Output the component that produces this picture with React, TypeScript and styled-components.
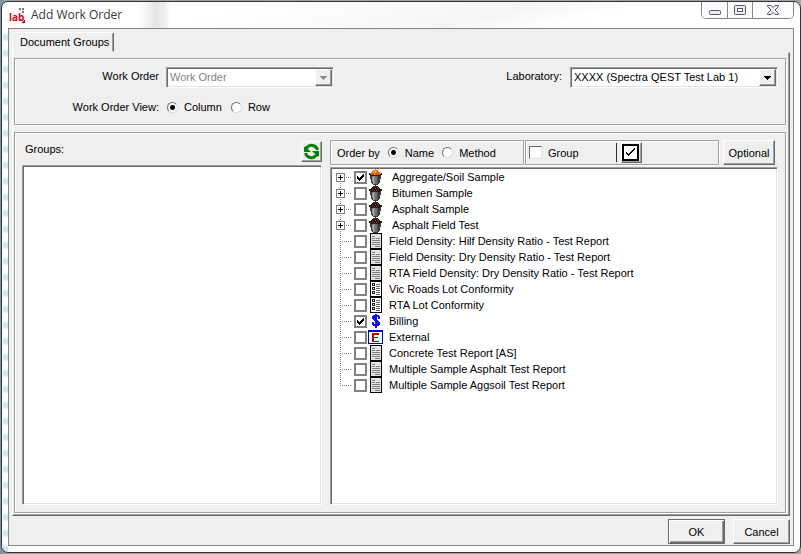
import React, { useState } from "react";
import styled, { createGlobalStyle, css } from "styled-components";

const face = "#efefef";
const mid = "#a0a0a0";
const dark = "#696969";

const GlobalStyle = createGlobalStyle`
  * { box-sizing: border-box; }
  body {
    margin: 0;
    font: 11px/16px "Liberation Sans", Arial, sans-serif;
    color: #000;
  }
  input, button, select { font: inherit; color: inherit; margin: 0; }
`;

const raised = css`
  border: 1px solid;
  border-color: #fff ${dark} ${dark} #fff;
  box-shadow: inset -1px -1px ${mid};
`;

const sunken = css`
  border: 1px solid;
  border-color: ${mid} #fff #fff ${mid};
  box-shadow: inset 1px 1px ${dark}, inset -1px -1px #e3e3e3;
`;

const etched = css`
  border: 1px solid ${mid};
  box-shadow: inset 1px 1px #fff, 1px 1px #fff;
`;

const Desktop = styled.div`
  min-height: 100vh;
  display: flex;
  padding: 1px 0 1px 1px;
  background: linear-gradient(90deg, #7e93a5 0 2px, #a3a5a4 8px);
`;

const Window = styled.main`
  flex: 1;
  display: flex;
  flex-direction: column;
  padding: 0 6px 6px;
  border: 1px solid #303236;
  border-radius: 7px;
  background:
    linear-gradient(90deg, #fff0 136px, #e6e6e6 154px, #efefef 164px, #fff0 168px) 0 0 / 100% 26px no-repeat,
    linear-gradient(165deg, #fff 30%, #f5f5f5 60%, #fff 72%) 0 0 / 100% 26px no-repeat,
    repeating-linear-gradient(180deg, #fff 0 4px, #cfe2f8 8px 10px, #fff 14px 16px) 1px 26px / 5px 100% no-repeat,
    #fdfdfd;
`;

const TitleBar = styled.header`
  display: flex;
  justify-content: space-between;
  height: 26px;
`;

const Title = styled.h1`
  display: flex;
  align-items: center;
  gap: 5px;
  margin: 0;
  font: 12px/26px "Open Sans", "Noto Sans", sans-serif;
  color: #363636;
`;

const Logo = styled.span`
  display: grid;
  width: 18px;
  height: 18px;
  > * { grid-area: 1 / 1; }
`;

const LogoWord = styled.span`
  padding-left: 1px;
  font: bold 10px/22px "Open Sans", sans-serif;
  color: #d4001a;
`;

const WindowButtons = styled.div`
  display: flex;
  height: 17px;
  border: 1px solid #85888c;
  border-top: 0;
  border-radius: 0 0 5px 5px;
  overflow: hidden;
`;

const WindowButton = styled.button<{ $wide?: boolean }>`
  display: grid;
  place-items: center;
  width: ${(p) => (p.$wide ? 41 : 25)}px;
  padding: 0;
  border: 0;
  background: #fcfcfc;
  & + & { border-left: 1px solid #85888c; }
`;

const Client = styled.div`
  flex: 1;
  display: flex;
  flex-direction: column;
  padding: 3px 3px 1px 3px;
  border: 1px solid #858585;
  background: ${face};
`;

const Tab = styled.button`
  align-self: flex-start;
  height: 20px;
  padding: 0 4px 0 7px;
  border: 1px solid;
  border-color: #fff ${dark} transparent #fff;
  box-shadow: inset -1px 0 ${mid};
  border-radius: 2px 2px 0 0;
  background: ${face};
`;

const TabPage = styled.section`
  flex: 1;
  display: flex;
  flex-direction: column;
  gap: 7px;
  padding: 5px 3px 2px 1px;
  border: 1px solid;
  border-color: transparent ${dark} ${dark} #fff;
  box-shadow: inset -1px -1px ${mid};
`;

const Filters = styled.div`
  display: flex;
  justify-content: space-between;
  align-items: flex-start;
  min-height: 67px;
  padding: 8px 7px 8px 19px;
  ${etched}
`;

const FilterGrid = styled.div`
  display: grid;
  grid-template-columns: 125px auto;
  column-gap: 7px;
  row-gap: 10px;
`;

const Caption = styled.label`
  text-align: right;
  line-height: 18px;
`;

const LabField = styled.div`
  display: flex;
  gap: 8px;
`;

const ComboFrame = styled.span<{ $wide?: boolean }>`
  display: grid;
  grid-template-columns: 1fr 17px;
  width: ${(p) => (p.$wide ? 208 : 168)}px;
  height: 21px;
  padding: 1px;
  background: #fff;
  ${sunken}
`;

const ComboSelect = styled.select`
  grid-area: 1 / 1 / 2 / 3;
  appearance: none;
  padding: 0 18px 0 2px;
  border: 0;
  background: transparent;
  outline-offset: -2px;
  line-height: 17px;
  &:disabled { color: #838383; opacity: 1; }
`;

const ComboArrow = styled.span<{ $off?: boolean }>`
  grid-area: 1 / 2;
  display: grid;
  place-items: center;
  pointer-events: none;
  color: ${(p) => (p.$off ? "#8c8c8c" : "#000")};
  background: ${face};
  ${raised}
`;

const Options = styled.div`
  display: flex;
  align-items: center;
  gap: 9px;
  padding-left: 1px;
`;

const Choice = styled.label`
  display: flex;
  align-items: center;
  gap: 6px;
`;

const Radio = styled.input`
  appearance: none;
  width: 11px;
  height: 11px;
  border: 1px solid;
  border-color: #707070 #d8d8d8 #d8d8d8 #707070;
  border-radius: 50%;
  background: #fff;
  &:checked { background: radial-gradient(circle, #000 0 2px, #fff 3px); }
`;

const Work = styled.div`
  flex: 1;
  display: grid;
  grid-template-columns: 300fr 448fr;
  gap: 8px;
  padding: 7px;
  ${etched}
`;

const Pane = styled.section`
  display: flex;
  flex-direction: column;
  min-width: 0;
`;

const PaneHead = styled.div`
  display: flex;
  justify-content: space-between;
  align-items: flex-start;
  height: 25px;
  padding: 1px 0 0 3px;
`;

const IconButton = styled.button`
  display: grid;
  place-items: center;
  width: 21px;
  height: 21px;
  padding: 0 1px 1px 0;
  background: ${face};
  ${raised}
`;

const List = styled.div`
  flex: 1;
  background: #fff;
  ${sunken}
`;

const ToolRow = styled.div`
  display: grid;
  grid-template-columns: 1fr 1fr 55px;
  column-gap: 1px;
  height: 27px;
  padding: 0 3px 2px 0;
`;

const ToolGroup = styled.div`
  display: flex;
  align-items: center;
  gap: 8px;
  padding-left: 6px;
  ${etched}
`;

const GroupTools = styled(ToolGroup)`
  gap: 0;
  padding-left: 3px;
`;

const Divider = styled.span`
  width: 1px;
  height: 19px;
  margin: 0 4px 0 37px;
  background: #303030;
`;

const PushButton = styled.button<{ $default?: boolean }>`
  height: 25px;
  padding: 0;
  background: ${face};
  ${raised}
  ${(p) =>
    p.$default &&
    css`
      border-color: ${dark};
      box-shadow: inset 1px 1px #fff, inset -1px -1px ${dark}, inset -2px -2px ${mid};
    `}
`;

const OptionalButton = styled(PushButton)`
  margin-left: 3px;
`;

const Tree = styled.ul`
  flex: 1;
  margin: 0;
  padding: 1px 1px 1px 5px;
  list-style: none;
  background: #fff;
  ${sunken}
`;

const TreeRow = styled.li`
  display: flex;
  height: 16px;
`;

const RowLabel = styled.label<{ $sample?: boolean }>`
  display: flex;
  align-items: center;
  gap: ${(p) => (p.$sample ? 9 : 6)}px;
  white-space: nowrap;
`;

const RowMark = styled.span`
  display: flex;
  align-items: center;
  gap: 1px;
`;

const BoxStack = styled.span`
  display: grid;
  place-items: center;
  > * { grid-area: 1 / 1; }
  svg { pointer-events: none; visibility: hidden; }
  input:checked + svg { visibility: visible; }
`;

const TreeBox = styled.input`
  appearance: none;
  width: 13px;
  height: 13px;
  border: 2px solid #808080;
  background: #fff;
`;

const PlainBox = styled.input`
  appearance: none;
  width: 13px;
  height: 13px;
  border: 1px solid;
  border-color: ${dark} #e3e3e3 #e3e3e3 ${dark};
  background: #fff;
`;

const Actions = styled.footer`
  display: grid;
  grid-template-columns: 57px 57px;
  justify-content: end;
  gap: 8px;
  padding-top: 3px;
`;

const Tick = () => (
  <svg width="9" height="9" viewBox="0 0 9 9" shapeRendering="crispEdges">
    <path d="M1 3h1v1h1v1h1v-1h1v-1h1v-1h1v-1h1v3h-1v1h-1v1h-1v1h-1v1h-1v-1h-1v-1h-1z" />
  </svg>
);

const Arrow = () => (
  <svg width="7" height="4" viewBox="0 0 7 4" shapeRendering="crispEdges">
    <path d="M0 0h7v1h-1v1h-1v1h-1v1h-1v-1h-1v-1h-1v-1h-1z" fill="currentColor" />
  </svg>
);

const Branch = ({ expandable, first, last }: { expandable: boolean; first: boolean; last: boolean }) => (
  <svg width="18" height="16" viewBox="0 0 18 16" shapeRendering="crispEdges">
    <path d={`M4.5 ${first ? 8 : 0}V${last ? 9 : 16}`} stroke="#808080" strokeDasharray="1 1" />
    <path d="M4 8.5H16" stroke="#808080" strokeDasharray="1 1" />
    {expandable && (
      <>
        <rect x="0.5" y="4.5" width="8" height="8" fill="#fff" stroke="#808080" />
        <path d="M2 8.5h5M4.5 6v5" stroke="#000" />
      </>
    )}
  </svg>
);

type Kind = "soil" | "bitumen" | "report" | "lot" | "billing" | "external";

const Bucket = ({ soil }: { soil: boolean }) => (
  <svg width="15" height="16" viewBox="0 0 15 16" shapeRendering="crispEdges">
    <path d="M2 6h11v4h-1v4h-1v1h-1v1H5v-1H4v-1H3v-4H2z" fill="#3c3c3c" />
    <path d="M4 7h3v8H5v-2H4z" fill="#8a8a8a" />
    <path d="M5 8h1v6H5z" fill="#b0b0b0" />
    <path d="M7 7h2v8H7z" fill="#707070" />
    <path d="M9 7h1v8H9z" fill="#545454" />
    <path d="M1 4h13v2h-1v1H2V6H1z" fill="#222" />
    <path
      d="M7 0h1v1h2v1h1v1h1v1h1v1h-1v1H3V5H2V4h1V3h1V2h1V1h2z"
      fill={soil ? "#e87416" : "#2c0f0a"}
    />
    {soil ? (
      <>
        <path d="M7 1h1v1h1v1h-1v1H6V3H5V2h2z" fill="#ffa53a" />
        <path d="M4 5h2v1H4zM8 4h1v1H8zM9 5h2v1H9z" fill="#a8430c" />
      </>
    ) : (
      <path d="M7 1h1v1H7zM5 2h1v1H5zM9 2h1v1H9zM4 4h1v1H4zM7 3h1v1H7zM10 4h1v1h-1zM6 5h1v1H6zM8 5h1v1H8z" fill="#9a3822" />
    )}
  </svg>
);

const KindIcon = ({ kind }: { kind: Kind }) => {
  if (kind === "soil" || kind === "bitumen") return <Bucket soil={kind === "soil"} />;
  return (
    <svg width="15" height="16" viewBox="0 0 15 16" shapeRendering="crispEdges">
      {kind === "report" && (
        <>
          <rect x="2.5" y="0.5" width="11" height="15" fill="#e2e2e2" stroke="#000" />
          <path d="M4 3.500h3M4 5.500h3M8 5.500h4M4 7.500h8M4 9.500h8M4 11.500h8M7 13.500h5" stroke="#808080" />
        </>
      )}
      {kind === "lot" && (
        <>
          <rect x="2.5" y="0.5" width="11" height="15" fill="#fff" stroke="#000" />
          <path d="M4.500 2.500h2v2h-2zM4.500 6.500h2v2h-2zM4.500 10.500h2v2h-2z" fill="none" stroke="#222" />
          <path d="M8 3.500h4M8 5.500h4M8 7.500h4M8 9.500h4M8 11.500h4M8 13.500h4" stroke="#666" />
        </>
      )}
      {kind === "billing" && (
        <path
          d="M7 1h2v1h2v1h1v3h-2V4H9v3h1v1h1v1h1v3h-1v1H9v2H7v-2H5v-1H4v-3h2v2h1V8H6V7H5V6H4V3h1V2h2z"
          fill="#1010f0"
        />
      )}
      {kind === "external" && (
        <>
          <rect x="0.5" y="1.500" width="14" height="13" fill="#fff" stroke="#0000a8" />
          <path d="M0 2h15" stroke="#0000a8" strokeWidth="2" />
          <path d="M4 4h7v2H6v2h4v1H6v3h5v1H4z" fill="#b00000" />
        </>
      )}
    </svg>
  );
};

const rows: { name: string; kind: Kind; on?: boolean }[] = [
  { name: "Aggregate/Soil Sample", kind: "soil", on: true },
  { name: "Bitumen Sample", kind: "bitumen" },
  { name: "Asphalt Sample", kind: "bitumen" },
  { name: "Asphalt Field Test", kind: "bitumen" },
  { name: "Field Density: Hilf Density Ratio - Test Report", kind: "report" },
  { name: "Field Density: Dry Density Ratio - Test Report", kind: "report" },
  { name: "RTA Field Density: Dry Density Ratio - Test Report", kind: "report" },
  { name: "Vic Roads Lot Conformity", kind: "lot" },
  { name: "RTA Lot Conformity", kind: "lot" },
  { name: "Billing", kind: "billing", on: true },
  { name: "External", kind: "external" },
  { name: "Concrete Test Report [AS]", kind: "report" },
  { name: "Multiple Sample Asphalt Test Report", kind: "report" },
  { name: "Multiple Sample Aggsoil Test Report", kind: "report" },
];

export default function App() {
  const [view, setView] = useState("Column");
  const [order, setOrder] = useState("Name");

  return (
    <>
      <GlobalStyle />
      <Desktop>
        <Window>
          <TitleBar>
            <Title>
              <Logo>
                <LogoWord>lab</LogoWord>
                <svg width="18" height="18" viewBox="0 0 18 18" shapeRendering="crispEdges">
                  <path d="M11 2h2v2h-2zM14 2h2v2h-2zM14 5h2v2h-2z" fill="#777" />
                  <path d="M17 14v3h-3v-1h1v-1h1v-1z" fill="#d4001a" />
                </svg>
              </Logo>
              Add Work Order
            </Title>
            <WindowButtons>
              <WindowButton aria-label="Minimize">
                <svg width="12" height="10" viewBox="0 0 12 10">
                  <rect x="0.5" y="5.500" width="11" height="4" rx="1" fill="#eee" stroke="#53556b" />
                </svg>
              </WindowButton>
              <WindowButton aria-label="Maximize">
                <svg width="12" height="10" viewBox="0 0 12 10">
                  <rect x="0.5" y="0.5" width="11" height="9" rx="1" fill="#eee" stroke="#53556b" />
                  <rect x="3.5" y="3.500" width="5" height="3" fill="#fff" stroke="#53556b" />
                </svg>
              </WindowButton>
              <WindowButton $wide aria-label="Close">
                <svg width="12" height="10" viewBox="0 0 12 10">
                  <path d="M.5.5h3.500L6 2.500l2-2h3.500v1L8 5l3.500 3.500v1H8l-2-2-2 2H.5v-1L4 5 .5 1.500z" fill="#eee" stroke="#53556b" />
                </svg>
              </WindowButton>
            </WindowButtons>
          </TitleBar>
          <Client>
            <Tab type="button">Document Groups</Tab>
            <TabPage>
              <Filters>
                <FilterGrid>
                  <Caption htmlFor="order">Work Order</Caption>
                  <ComboFrame>
                    <ComboSelect id="order" disabled>
                      <option>Work Order</option>
                    </ComboSelect>
                    <ComboArrow $off>
                      <Arrow />
                    </ComboArrow>
                  </ComboFrame>
                  <Caption as="span">Work Order View:</Caption>
                  <Options role="radiogroup" aria-label="Work Order View">
                    {["Column", "Row"].map((v) => (
                      <Choice key={v}>
                        <Radio type="radio" name="view" checked={view === v} onChange={() => setView(v)} />
                        {v}
                      </Choice>
                    ))}
                  </Options>
                </FilterGrid>
                <LabField>
                  <Caption htmlFor="lab">Laboratory:</Caption>
                  <ComboFrame $wide>
                    <ComboSelect id="lab">
                      <option>XXXX (Spectra QEST Test Lab 1)</option>
                    </ComboSelect>
                    <ComboArrow>
                      <Arrow />
                    </ComboArrow>
                  </ComboFrame>
                </LabField>
              </Filters>
              <Work>
                <Pane>
                  <PaneHead>
                    <span>Groups:</span>
                    <IconButton aria-label="Refresh groups">
                      <svg width="17" height="17" viewBox="0 0 17 17">
                        <path
                          d="M14.500 7A6 6 0 0 0 4 4.500M2.500 10A6 6 0 0 0 13 12.500"
                          fill="none"
                          stroke="#078207"
                          strokeWidth="3"
                        />
                        <path d="M1 4v5h7L5 6 4 3zM16 13V8H9l3 3 1 3z" fill="#078207" />
                      </svg>
                    </IconButton>
                  </PaneHead>
                  <List />
                </Pane>
                <Pane>
                  <ToolRow>
                    <ToolGroup role="radiogroup" aria-label="Order by">
                      <span>Order by</span>
                      {["Name", "Method"].map((v) => (
                        <Choice key={v}>
                          <Radio type="radio" name="sort" checked={order === v} onChange={() => setOrder(v)} />
                          {v}
                        </Choice>
                      ))}
                    </ToolGroup>
                    <GroupTools>
                      <Choice>
                        <BoxStack>
                          <PlainBox type="checkbox" />
                          <Tick />
                        </BoxStack>
                        Group
                      </Choice>
                      <Divider />
                      <IconButton aria-label="Select all">
                        <svg width="17" height="17" viewBox="0 0 17 17" shapeRendering="crispEdges">
                          <rect x="1" y="1" width="15" height="15" fill="#fff" stroke="#000" strokeWidth="2" />
                          <path d="M4 8h1v1h1v1h1v-1h1V8h1V7h1V6h1V5h1V4h1v2h-1v1h-1v1h-1v1H9v1H8v1H7v1H6v-1H5v-1H4z" />
                        </svg>
                      </IconButton>
                    </GroupTools>
                    <OptionalButton type="button">Optional</OptionalButton>
                  </ToolRow>
                  <Tree>
                    {rows.map((r, i) => {
                      const sample = r.kind === "soil" || r.kind === "bitumen";
                      return (
                        <TreeRow key={r.name}>
                          <Branch expandable={sample} first={i === 0} last={i === rows.length - 1} />
                          <RowLabel $sample={sample}>
                            <RowMark>
                              <BoxStack>
                                <TreeBox type="checkbox" defaultChecked={r.on} />
                                <Tick />
                              </BoxStack>
                              <KindIcon kind={r.kind} />
                            </RowMark>
                            {r.name}
                          </RowLabel>
                        </TreeRow>
                      );
                    })}
                  </Tree>
                </Pane>
              </Work>
            </TabPage>
            <Actions>
              <PushButton type="button" $default>OK</PushButton>
              <PushButton type="button">Cancel</PushButton>
            </Actions>
          </Client>
        </Window>
      </Desktop>
    </>
  );
}
